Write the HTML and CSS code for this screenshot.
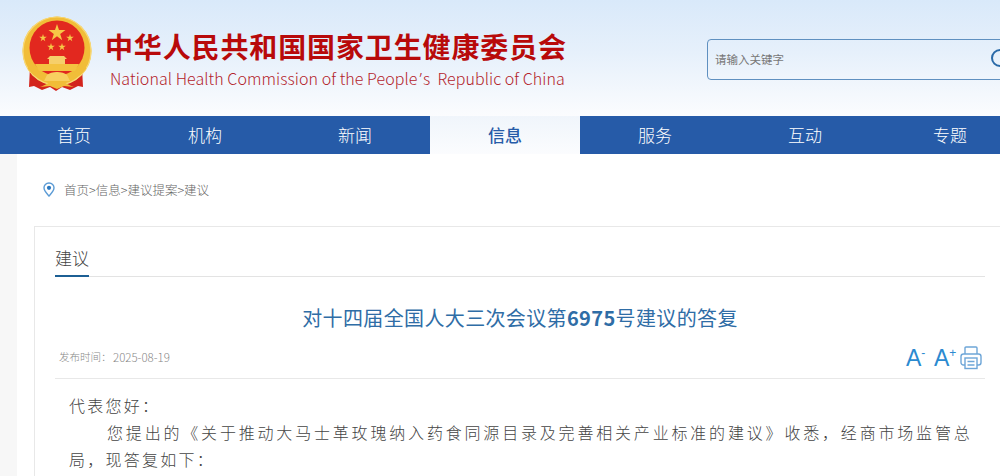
FILE: index.html
```html
<!DOCTYPE html>
<html lang="zh-CN">
<head>
<meta charset="utf-8">
<title>对十四届全国人大三次会议第6975号建议的答复</title>
<link rel="stylesheet" href="styles.css">
</head>
<body>
<header class="top">
  <div class="brand">
    <svg class="emblem" width="72" height="78" viewBox="0 0 72 78">
      <path d="M10 52 L9 72 L14 71 L22 75 L30 72 L36 76 L42 72 L50 75 L58 71 L63 72 L62 52Z" fill="#d3241d"/>
      <circle cx="37" cy="36" r="34.5" fill="#f1bd38"/>
      <circle cx="37" cy="36" r="34" fill="none" stroke="#f8d976" stroke-width="1.2"/>
      <circle cx="37" cy="33" r="27.5" fill="#e2281f"/>
      <path d="M8 45 C14 58 26 62 37 57 C48 62 60 58 66 45 L66 54 C60 62 52 66 44 64 L37 60 L30 64 C22 66 14 62 8 54Z" fill="#f1bd38"/>
      <polygon fill="#f6c846" points="37,9 39,15 45.5,15 40.2,18.9 42.2,25.2 37,21.3 31.8,25.2 33.8,18.9 28.5,15 35,15"/>
      <polygon fill="#f6c846" points="23,19 23.9,21.8 26.8,21.8 24.4,23.5 25.3,26.3 23,24.6 20.7,26.3 21.6,23.5 19.2,21.8 22.1,21.8"/>
      <polygon fill="#f6c846" points="50,19 50.9,21.8 53.8,21.8 51.4,23.5 52.3,26.3 50,24.6 47.7,26.3 48.6,23.5 46.2,21.8 49.1,21.8"/>
      <polygon fill="#f6c846" points="31,28 31.9,30.8 34.8,30.8 32.4,32.5 33.3,35.3 31,33.6 28.7,35.3 29.6,32.5 27.2,30.8 30.1,30.8"/>
      <polygon fill="#f6c846" points="42,28 42.9,30.8 45.8,30.8 43.4,32.5 44.3,35.3 42,33.6 39.7,35.3 40.6,32.5 38.2,30.8 41.1,30.8"/>
      <path d="M27 44 L30 41 H44 L47 44 H45 V49 H49 V50 H25 V49 H29 V44Z" fill="#f6cf6a"/>
      <path d="M15 49 H59 L55 56 H19Z" fill="#f4c240"/>
      <path d="M27 60 C31 56 43 56 47 60 L50 66 H24Z" fill="#f8d060"/>
      <path d="M20 72 C26 70 30 66 37 66 C44 66 48 70 54 72 L44 71 L37 74 L30 71Z" fill="#f1bd38"/>
    </svg>
    <div class="names">
      <div class="name-cn">中华人民共和国国家卫生健康委员会</div>
      <div class="name-en">National Health Commission of the People<span class="apos">’</span>s&nbsp;&nbsp;Republic of China</div>
    </div>
  </div>
  <div class="search">
    <span class="placeholder">请输入关键字</span>
    <svg class="search-icon" width="22" height="22" viewBox="0 0 22 22"><circle cx="10" cy="10" r="8" fill="none" stroke="#2a6aa8" stroke-width="2"/></svg>
  </div>
</header>
<nav class="nav">
  <a class="nav-item first">首页</a>
  <a class="nav-item">机构</a>
  <a class="nav-item">新闻</a>
  <a class="nav-item active">信息</a>
  <a class="nav-item">服务</a>
  <a class="nav-item">互动</a>
  <a class="nav-item last">专题</a>
</nav>
<main class="page">
  <div class="crumbs">
    <svg class="pin" width="12" height="15" viewBox="0 0 12 15"><path d="M6 1 C3 1 1 3.2 1 5.8 C1 9 4 11.8 6 14 C8 11.8 11 9 11 5.8 C11 3.2 9 1 6 1Z" fill="none" stroke="#5b9bd5" stroke-width="1.4"/><circle cx="6" cy="5.8" r="2.1" fill="#2a78c0"/></svg>
    <span>首页&gt;信息&gt;建议提案&gt;建议</span>
  </div>
  <section class="card">
    <div class="tabbar"><span class="tab">建议</span></div>
    <h1 class="title">对十四届全国人大三次会议第<b>6975</b>号建议的答复</h1>
    <div class="meta">
      <div class="date"><span class="date-label">发布时间&#xFF1A;</span><span>2025-08-19</span></div>
      <div class="tools">
        <span class="font-btn">A<sup>-</sup></span>
        <span class="font-btn">A<sup>+</sup></span>
        <svg class="printer" width="22" height="24" viewBox="0 0 22 24" fill="none" stroke="#6ea6d8" stroke-width="1.4"><path d="M5 8 V2 Q5 1 6 1 H16 Q17 1 17 2 V8"/><rect x="1" y="8" width="20" height="11" rx="2.5"/><rect x="5" y="12" width="12" height="10.5" fill="#fff"/><path d="M7.5 15.5 H14.5 M7.5 19 H14.5"/></svg>
      </div>
    </div>
    <article class="body">
      <p class="plain">代表您好&#xFF1A;</p>
      <p>您提出的《关于推动大马士革玫瑰纳入药食同源目录及完善相关产业标准的建议》收悉&#xFF0C;经商市场监管总局&#xFF0C;现答复如下&#xFF1A;</p>
    </article>
  </section>
</main>
</body>
</html>
```
FILE: styles.css
```css
* { box-sizing: border-box; }
html, body { margin: 0; height: 476px; overflow: hidden; background: #fff; }
body { font-family: "Noto Sans CJK SC", "Noto Sans", sans-serif; }

.top {
  height: 116px;
  display: flex;
  justify-content: space-between;
  background: linear-gradient(180deg, #d9e9fa 0%, #e6f0fb 45%, #fbfcfe 100%);
}
.brand { display: flex; padding: 15px 0 0 20px; }
.emblem { flex: none; }
.names { margin: 13px 0 0 13px; }
.name-cn { font-size: 28px; line-height: 36px; font-weight: 700; letter-spacing: 0.87px; color: #b80a0a; white-space: nowrap; }
.name-en { margin: 3px 0 0 5px; font-family: "Noto Sans CJK SC", sans-serif; font-size: 16px; line-height: 22px; font-weight: 300; letter-spacing: 0.06px; color: #b3222a; white-space: nowrap; }
.apos { font-family: "Noto Sans", sans-serif; margin: 0 1px 0 2px; }

.search {
  width: 320px; height: 41px; margin: 39px -27px 0 0;
  border: 1px solid #5f90c0; border-radius: 4px;
  display: flex; align-items: center; padding: 0 0 2px 7px; position: relative;
  flex: none;
}
.placeholder { font-size: 11.5px; color: #777; }
.search-icon { position: absolute; left: 282px; top: 8px; }

.nav { display: flex; height: 38px; background: #265ba8; }
.nav-item { flex: 0 0 150px; text-align: center; color: #fff; font-size: 17px; line-height: 37px; font-weight: 300; }
.nav-item.first { flex-basis: 130px; padding-left: 18px; }
.nav-item.last { flex-basis: 140px; }
.nav-item.active { background: linear-gradient(180deg, #f0f5fb, #fbfcfe); color: #265ba8; font-weight: 500; }

.page { margin-left: 0; padding: 0 0 0 34px; background: linear-gradient(90deg, #f7f7f7 17px, #fff 17px); height: 322px; }
.crumbs { display: flex; align-items: center; gap: 9px; height: 72px; padding: 0 0 2px 9px; font-size: 12.5px; color: #666; font-weight: 300; }
.pin { flex: none; }
.card { border: 1px solid #e8e8e8; border-width: 1px 0 0 1px; padding: 0 15px 0 20px; height: 250px; }
.tabbar { height: 50px; border-bottom: 1px solid #e3e3e3; display: flex; align-items: flex-end; }
.tab { display: block; width: 34px; height: 31px; font-size: 17px; line-height: 24px; font-weight: 300; color: #444; border-bottom: 2px solid #1c5f94; margin-bottom: -1px; white-space: nowrap; }
.title { margin: 0; padding-top: 27px; height: 72px; text-align: center; font-size: 20px; line-height: 28px; letter-spacing: 0.36px; font-weight: 400; color: #2f6da6; }
.title b { font-weight: 700; }
.meta { display: flex; justify-content: space-between; align-items: center; height: 30px; border-bottom: 1px solid #e8e8e8; padding: 0 3px 0 4px; }
.date { font-size: 11.5px; color: #888; display: flex; gap: 0; margin-top: -13px; font-weight: 300; }
.date-label { font-size: 10.5px; line-height: 16px; width: 54px; white-space: nowrap; }
.tools { display: flex; align-items: center; gap: 5px; margin-top: -11px; }
.font-btn { font-family: "Liberation Sans", sans-serif; font-size: 23px; line-height: 24px; color: #2b8ad0; width: 23px; white-space: nowrap; }
.font-btn sup { font-size: 12px; line-height: 0; vertical-align: 9px; margin-left: 0; }
.printer { margin-left: -2px; }
.body { padding: 13px 13px 0 14px; font-size: 16px; line-height: 27px; letter-spacing: 2.25px; color: #444; font-weight: 300; }
.body p { margin: 0; text-indent: 38px; text-align: justify; }
.body p.plain { text-indent: 0; }
```
